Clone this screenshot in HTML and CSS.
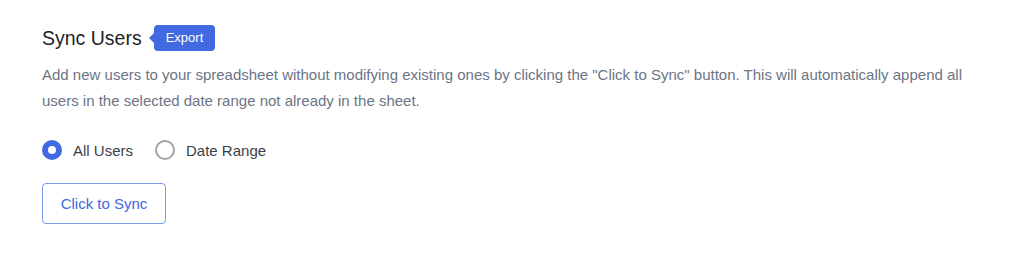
FILE: index.html
```html
<!DOCTYPE html>
<html>
<head>
<meta charset="utf-8">
<link rel="stylesheet" href="styles.css">
</head>
<body>
<section class="panel">
  <div class="head">
    <h2 class="title">Sync Users</h2>
    <span class="badge">Export</span>
  </div>
  <p class="desc">Add new users to your spreadsheet without modifying existing ones by clicking the "Click to Sync" button. This will automatically append all users in the selected date range not already in the sheet.</p>
  <div class="radios">
    <label class="radio"><span class="dot checked"></span>All Users</label>
    <label class="radio"><span class="dot"></span>Date Range</label>
  </div>
  <button class="btn">Click to Sync</button>
</section>
</body>
</html>
```
FILE: styles.css
```css
html, body { margin: 0; padding: 0; background: #fff; }
body { font-family: "Liberation Sans", Arial, sans-serif; }
.panel { padding: 25px 42px 0 42px; width: 940px; }
.head { display: flex; align-items: center; height: 26px; }
.title { margin: 0; font-size: 19.5px; font-weight: 400; color: #1f2328; }
.badge { position: relative; margin-left: 12px; background: #4169e1; color: #fff; font-size: 13px; height: 26px; line-height: 26px; padding: 0 12px; border-radius: 4px; }
.badge::before { content: ""; position: absolute; left: -5px; top: 8px; border-right: 5px solid #4169e1; border-top: 5px solid transparent; border-bottom: 5px solid transparent; }
.desc { margin: 11px 0 0 0; font-size: 15px; line-height: 26px; color: #6b7585; }
.radios { display: flex; gap: 22px; margin-top: 25px; align-items: center; height: 22px; }
.radio { display: flex; align-items: center; gap: 11px; font-size: 15px; color: #3a3f47; }
.dot { width: 20px; height: 20px; box-sizing: border-box; border: 2px solid #a3a3a3; border-radius: 50%; background: #fff; }
.dot.checked { border: 6px solid #4169e1; }
.btn { display: block; margin-top: 22px; width: 124px; height: 41px; background: #fff; border: 1px solid #7b9ae8; border-radius: 4px; color: #4169e1; font-family: "Liberation Sans", Arial, sans-serif; font-size: 15px; padding: 0; }
```
